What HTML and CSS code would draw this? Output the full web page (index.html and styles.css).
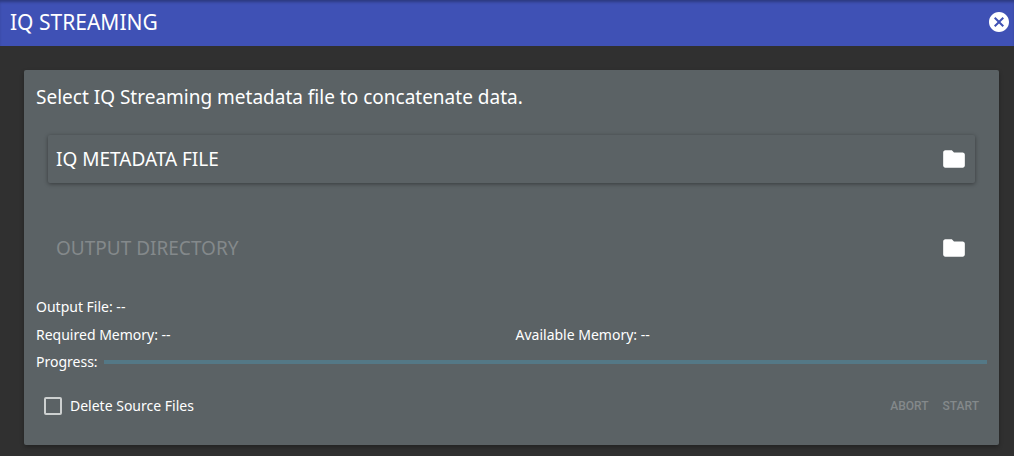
FILE: index.html
```
<!DOCTYPE html>
<html lang="en">

<head>
    <meta charset="UTF-8">
    <meta name="viewport" content="width=device-width, initial-scale=1.0">

    <title>IQ Streaming</title>

    <link rel="stylesheet" href="styles.css">
</head>

<body>
    <header class="toolbar">
        <h1 class="title">IQ STREAMING</h1>

        <button class="close" type="button" aria-label="Close">
            <svg width="24" height="24" viewBox="0 0 24 24" fill="#fff">
                <path d="M12 2C6.47 2 2 6.47 2 12s4.47 10 10 10 10-4.47 10-10S17.53 2 12 2zm5 13.59L15.59 17 12 13.41 8.41 17 7 15.59 10.59 12 7 8.41 8.41 7 12 10.59 15.59 7 17 8.41 13.41 12 17 15.59z"/>
            </svg>
        </button>
    </header>

    <main class="card">
        <h2 class="intro">Select IQ Streaming metadata file to concatenate data.</h2>

        <div class="pickers">
            <button class="picker raised" type="button">
                <span>IQ METADATA FILE</span>
                <svg width="26" height="26" viewBox="0 0 24 24" fill="#fff">
                    <path d="M10 4H4c-1.1 0-1.99.9-1.99 2L2 18c0 1.1.9 2 2 2h16c1.1 0 2-.9 2-2V8c0-1.1-.9-2-2-2h-8l-2-2z"/>
                </svg>
            </button>

            <button class="picker" type="button" disabled>
                <span>OUTPUT DIRECTORY</span>
                <svg width="26" height="26" viewBox="0 0 24 24" fill="#fff">
                    <path d="M10 4H4c-1.1 0-1.99.9-1.99 2L2 18c0 1.1.9 2 2 2h16c1.1 0 2-.9 2-2V8c0-1.1-.9-2-2-2h-8l-2-2z"/>
                </svg>
            </button>
        </div>

        <div class="info">
            <p>Output File: --</p>

            <div class="memory">
                <p>Required Memory: --</p>
                <p>Available Memory: --</p>
            </div>

            <div class="progress">
                <label for="progress">Progress:</label>
                <progress id="progress" class="bar" value="0" max="100"></progress>
            </div>
        </div>

        <div class="actions">
            <input type="checkbox" id="delete" class="check">
            <label for="delete">Delete Source Files</label>

            <div class="buttons">
                <button class="action" type="button" disabled>ABORT</button>
                <button class="action" type="button" disabled>START</button>
            </div>
        </div>
    </main>
</body>

</html>
```
FILE: styles.css
```
* {
    box-sizing: border-box;
    margin: 0;
    padding: 0;
}

body {
    background-color: #303030;
    color: white;

    font-family: "Noto Sans", sans-serif;
    font-size: 14px;
    line-height: 20px;
}

button {
    background: none;
    border: none;

    color: white;
    font-family: inherit;
}

svg {
    display: block;
}

.toolbar {
    display: flex;
    align-items: center;
    justify-content: space-between;

    height: 46px;
    padding: 0 3px 2px 10px;

    background-color: #3f51b5;
    box-shadow: inset 0 3px 3px -1px rgba(0, 0, 0, 0.3);
}

.title {
    font-size: 21px;
    font-weight: 400;
}

.card {
    margin: 24px 15px 11px 24px;
    padding: 12px;

    background-color: #5b6265;
    border-radius: 2px;
    box-shadow: 0 2px 4px rgba(0, 0, 0, 0.3);
}

.intro {
    font-size: 19px;
    font-weight: 400;
    line-height: 30px;
}

.pickers {
    display: flex;
    flex-direction: column;
    gap: 41px;

    padding: 23px 12px;
}

.picker {
    display: flex;
    align-items: center;
    justify-content: space-between;

    height: 48px;
    padding: 0 8px;

    border-radius: 2px;

    font-size: 19px;
}

.picker:disabled {
    color: #84898b;
}

.raised {
    box-shadow: 0 1px 4px rgba(0, 0, 0, 0.4);
}

.info {
    display: flex;
    flex-direction: column;
    gap: 8px;

    padding-top: 2px;
}

.memory {
    display: grid;
    grid-template-columns: 1fr 1fr;
    gap: 8px;
}

.progress {
    display: flex;
    align-items: center;
    gap: 6px;

    line-height: 18px;
}

.bar {
    appearance: none;
    flex: 1;

    height: 4px;

    background-color: #547886;
    border: none;
}

.bar::-webkit-progress-bar {
    background-color: #547886;
}

.bar::-webkit-progress-value {
    background-color: #80d8ff;
}

.actions {
    display: flex;
    align-items: center;
    gap: 8px;

    padding: 25px 8px 17px;
}

.check {
    appearance: none;

    width: 18px;
    height: 18px;

    border: 2px solid #cdd0d0;
    border-radius: 2px;
}

.check:checked {
    background-color: #3f51b5;
}

.buttons {
    display: flex;
    gap: 14px;

    margin-left: auto;
}

.action {
    font-family: Roboto, sans-serif;
    font-size: 12px;
    font-weight: 500;
    line-height: 20px;
}

.action:disabled {
    color: #84898b;
}
```
